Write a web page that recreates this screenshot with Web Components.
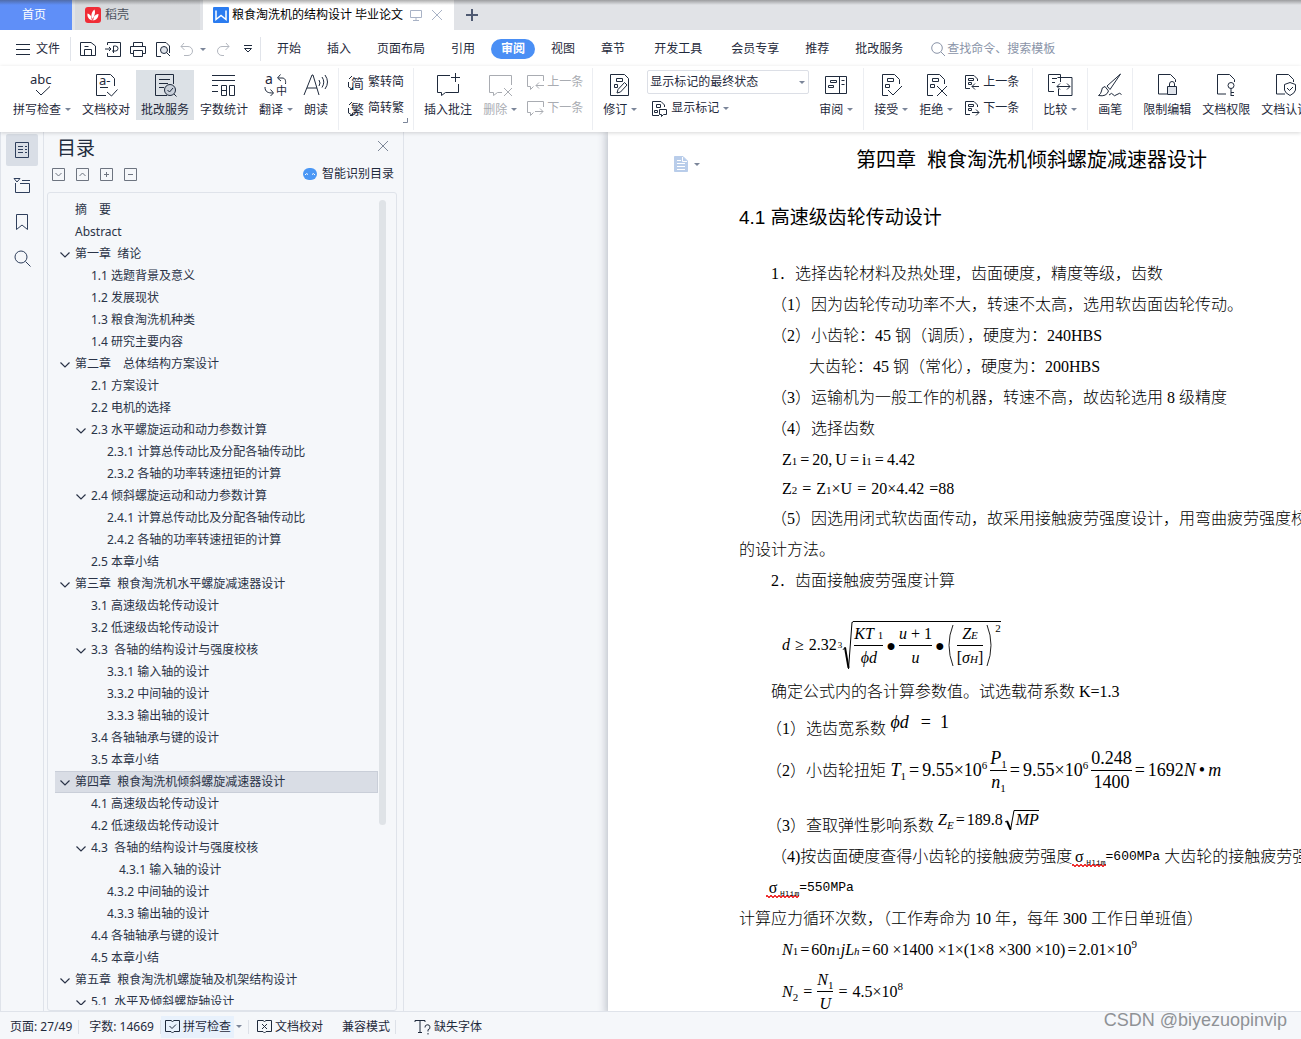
<!DOCTYPE html>
<html lang="zh-CN">
<head>
<meta charset="utf-8">
<title>粮食淘洗机的结构设计 毕业论文</title>
<style>
  html, body { margin: 0; height: 100%; overflow: hidden; }
  body { font: 12px/16px "Noto Sans", "Noto Sans CJK SC", sans-serif; color: #1f2a3c; background: #f5f7fa; }
</style>
</head>
<body>
<writer-app></writer-app>

<script>
const define = (name, css, html) => {
  customElements.define(name, class extends HTMLElement {
    constructor() {
      super();
      this.attachShadow({ mode: "open" });
    }
    connectedCallback() {
      if (this.ready) return;
      this.ready = true;
      const body = typeof html === "function" ? html(this) : html;
      this.shadowRoot.innerHTML = `<style>*{box-sizing:border-box}button{font:inherit;color:inherit;background:none;border:0;padding:0;margin:0;white-space:nowrap}${css}</style>${body}`;
    }
  });
};

/* Icon drawings: [width, height, svg content] */
const page = '<path d="M12 21H3.500V1.500H15.500L20.500 6.500V9"/>';
const smallPage = '<path d="M7 14.500H2.500V1.500H11L14.500 5V7"/><path d="M5.500 4.500h5v2h-5zM5.500 8.500h3v2h-3z"/>';
const markPage = '<path d="M9 22.500H3.500V1.500H15.500L20.500 6.500V11"/><path d="M8.500 5.500h6v3h-6zM6.500 11.500h4v3h-4z"/>';
const icons = {
  flame: [16, 16, '<rect width="16" height="16" rx="3" fill="#f02c36" stroke="none"/><path d="M7.500 13.500C3.500 12.500 2 9.500 2.500 6.500C4.500 7 6 8.500 6.500 10.500C6 7 7 4.500 9.500 2.500C10.500 5 10 7.500 8.500 10.500C9.500 8.500 11.500 7 13.500 7C13.500 10.500 11.500 13.500 7.500 13.500Z" fill="#fff" stroke="none"/><path d="M6.500 10.500L7.500 13.500L8.500 10.500" stroke="#f02c36" stroke-width=".8"/>'],
  writer: [16, 16, '<rect width="16" height="16" rx="1" fill="#2b7cf0" stroke="none"/><path d="M3 3.500V12.500L8 8.500L13 12.500V3.500" stroke="#fff" stroke-width="1.500"/>'],
  monitor: [12, 12, '<path d="M.5 1.500h11v7H.5zM6 8.500v3M3 11.500h6"/>'],
  close: [12, 12, '<path d="M1 1L11 11M11 1L1 11"/>'],
  plus: [12, 12, '<path d="M6 0V12M0 6H12" stroke-width="2"/>'],
  burger: [14, 14, '<path d="M0 2.500H14M0 7.500H14M0 12.500H14"/>'],
  save: [16, 16, '<path d="M.5 14.500V1.500H11L15.500 5V14.500ZM4.500 14V8.500H11.500V14M4.500 5.500H8.500"/>'],
  pdf: [16, 16, '<path d="M2.500 4V1.500H15.500V15.500H2.500V12M0 8h6M4 6l2 2l-2 2M8.500 12V5h2a2 2 0 0 1 0 5H7"/>'],
  print: [16, 16, '<path d="M3.500 5V1.500H12.500V5M3.500 12.500H.5V5.500H15.500V12.500H12.500M3.500 9.500H12.500V15.500H3.500Z"/>'],
  preview: [16, 16, '<path d="M6 15.500H1.500V1.500H11L14.500 5V12"/><circle cx="9" cy="9" r="3.500" fill="#dfe3ea"/><path d="M11.500 11.500L15 15"/>'],
  undo: [14, 14, '<path d="M4 1L1 4.500L4.500 8M1 4.500H8a4.200 4.200 0 0 1 0 9H4"/>'],
  redo: [14, 14, '<path d="M10 1L13 4.500L9.500 8M13 4.500H6a4.200 4.200 0 0 0 0 9H8"/>'],
  more: [8, 8, '<path d="M0 .5H8M.5 3.500L4 7L7.500 3.500Z"/>'],
  search: [15, 15, '<circle cx="6" cy="6" r="5.300"/><path d="M10 10L14 14"/>'],
  spell: [24, 24, '<text x="0" y="11" font-size="13">abc</text><path d="M6 17L11 22L20 13.500"/>'],
  proof: [24, 24, '<path d="M12 22.500H2.500V1.500H16.500L20.500 5.500V13M6 14.500H14M13 19L17.500 23L23.500 16.500"/><text x="5" y="12" font-size="13">a-</text>'],
  review: [24, 24, '<path d="M14 22.500H2.500V1.500H20.500V11M6 6.500H17M6 10.500H15M6 14.500H11"/><circle cx="17" cy="17" r="5.500" fill="#c8cfd9"/><path d="M14.500 17L16.500 19L20 15M21 21L23.500 23.500"/>'],
  count: [24, 24, '<path d="M0 2.500H23M0 7.500H23M0 12.500H6M0 18.500H6M9.500 12.500h5v10h-5zM9.500 17.500h5M17.500 12.500h5v10h-5z"/>'],
  translate: [24, 24, '<text x="1" y="11" font-size="14">a</text><text x="12" y="22" font-size="11">中</text><path d="M14 5H18C21 5 22 7 21.500 11M16.500 1.500L13.500 5L17 8M1 14C1 19 4 20 9 20M6.500 16.500L9.500 20L6.500 23"/>'],
  read: [24, 24, '<path d="M0 22L8 2H9L15 22M3 15H13M15 7Q17 10 15 13M18 4Q21.500 9 18 14.500M21 2Q26 9 21 16"/>'],
  toSimple: [17, 17, '<text x="3" y="14" font-size="13">简</text><path d="M4 2L1 5M.5 8V13L4 15M2 15.500H4.500V13"/>'],
  toTrad: [17, 17, '<text x="3" y="14" font-size="13">繁</text><path d="M4 2L1 5M.5 8V13L4 15M2 15.500H4.500V13"/>'],
  addNote: [24, 24, '<path d="M14 2.500H1.500V19.500H5.500V22.500L9.500 19.500H22.500V11M19.500 0V9M15 4.500H24"/>'],
  delNote: [24, 24, '<path d="M23.500 12V2.500H1.500V19.500H5.500V22.500L9.500 19.500H14M16 15L24 23M24 15L16 23"/>'],
  prevNote: [17, 18, '<path d="M16.500 8V2.500H.5V13.500H3.500V16.500L6.500 13.500M17 12.500H9M12 9.500L9 12.500L12 15.500"/>'],
  nextNote: [17, 18, '<path d="M16.500 8V2.500H.5V13.500H3.500V16.500L6.500 13.500M8 12.500H16M13 9.500L16 12.500L13 15.500"/>'],
  track: [24, 24, '<path d="M2.500 22.500V1.500H16.500L20.500 5.500V22.500ZM8.500 5.500h6v3h-6zM6.500 11.500h3v3h-3z"/><path d="M9 20L10 16.500L16.500 9.500L19 12L12.500 19Z" fill="#fff"/>'],
  showMark: [17, 17, '<path d="M8 15.500H1.500V1.500H10L13.500 5V7M5.500 4.500h4v3h-4zM3.500 10.500h3v2h-3zM8.500 9.500h7v5h-3l-2 2v-2h-2z"/>'],
  pane: [24, 24, '<path d="M1.500 3.500h21v17h-21zM15.500 3.500v17M6.500 7.500h6v2h-6zM4.500 12.500h5v2h-5zM17.500 7.500h3M17.500 11.500h3"/>'],
  accept: [24, 24, markPage + '<path d="M9 17L14 22L23 13"/>'],
  reject: [24, 24, markPage + '<path d="M13 13L23 23M23 13L13 23"/>'],
  prevMark: [17, 17, smallPage + '<path d="M16 12.500H9M12 9.500L9 12.500L12 15.500"/>'],
  nextMark: [17, 17, smallPage + '<path d="M9 12.500H16M13 9.500L16 12.500L13 15.500"/>'],
  compare: [24, 24, '<path d="M6 18.500H.5V1.500H12.500V9M9.500 4.500H24V22.500H10.500V16M4 5.500H9M4 9.500H7M9 13.500H22M12 10.500L9 13.500L12 16.500M19 10.500L22 13.500L19 16.500"/>'],
  brush: [24, 24, '<path d="M22.500 1L9 13L12 16.500L22.500 1ZM7 13.500Q3.500 14 3.500 18Q3 21 .5 22.500Q8.500 24 10.500 18ZM11 22Q14 19 15 21.500T19 21.500T23.500 21.500"/>'],
  lock: [24, 24, page + '<path d="M12.500 13.500h9v8h-9z" fill="#dfe3ea"/><path d="M14.500 13V11a2.500 2.500 0 0 1 5 0V13"/>'],
  key: [24, 24, page + '<circle cx="17" cy="12.500" r="3"/><path d="M17 15.500V23M17 19.500H20M17 22.500H20"/>'],
  shield: [24, 24, page + '<path d="M11.500 11.500L17 9.500L22.500 11.500V17Q22 20 17 22.500Q12 20 11.500 17ZM14 15L16.500 17.500L20 14"/>'],
  outline: [16, 16, '<path d="M1.500 .5h13v15h-13zM4 4.500h5M11 4.500h2M4 7.500h5M11 7.500h2M4 10.500h5M11 10.500h2"/>'],
  thumbs: [16, 16, '<path d="M1.500 5V14.500H15.500V5.500H6M8 2.500H16M0 .5H6L3 4Z"/>'],
  bookmark: [16, 16, '<path d="M2.500 .5H13.500V15.500L8 11L2.500 15.500Z"/>'],
  find: [17, 17, '<circle cx="7" cy="7" r="6"/><path d="M11.500 11.500L16.500 16.500"/>'],
  boxDown: [13, 13, '<path d="M.5 .5h12v12H.5zM3.500 5L6.500 8L9.500 5"/>'],
  boxUp: [13, 13, '<path d="M.5 .5h12v12H.5zM3.500 8L6.500 5L9.500 8"/>'],
  boxPlus: [13, 13, '<path d="M.5 .5h12v12H.5zM4 6.500H9M6.500 4V9"/>'],
  boxMinus: [13, 13, '<path d="M.5 .5h12v12H.5zM4 6.500H9"/>'],
  robot: [15, 13, '<rect width="14" height="12" rx="6" fill="#4a97f5" stroke="none"/><path d="M2 7Q3.500 4.500 5 6.500M9 6.500Q10.500 4.500 12 7" stroke="#fff"/>'],
  chevron: [10, 10, '<path d="M.5 2.500L5 7L9.500 2.500" stroke-width="1.200"/>'],
  bookCheck: [15, 15, '<path d="M.5 1.500H6L7.500 2.500L9 1.500H14.500V12.500H9L7.500 14L6 12.500H.5ZM4.500 7L7 9.500L11 5.500"/>'],
  bookCross: [15, 15, '<path d="M.5 1.500H6L7.500 2.500L9 1.500H14.500V12.500H9L7.500 14L6 12.500H.5ZM5 5L10 10M10 5L5 10"/>'],
  missing: [16, 16, '<path d="M0 3V1.500H10V3M5 1.500V13.500M3 13.500H7M10 8.500a2.500 2.500 0 1 1 3 2.200V12.500M13 14V15.500"/>'],
  doc: [14, 16, '<path d="M.5 .5H9L13.500 5V15.500H.5Z" fill="#b9cdea" stroke="#b9cdea"/><path d="M3 4.500H7M3 7.500H11M3 10.500H11M3 13.500H11M8.500 1V5.500H13" stroke="#fff"/>'],
  corner: [5, 5, '<path d="M4.500 0V4.500H0"/>'],
};

define("ui-icon", `
  :host { display: inline-flex; flex: none; }
  svg { display: block; fill: none; stroke: currentColor; stroke-width: 1; overflow: visible; }
  text { fill: currentColor; stroke: none; font-family: "Noto Sans", "Noto Sans CJK SC", sans-serif; }
`, el => {
  const [w, h, body] = icons[el.getAttribute("name")];
  return `<svg width="${w}" height="${h}" viewBox="0 0 ${w} ${h}" aria-hidden="true">${body}</svg>`;
});

define("ui-caret", `
  :host { display: inline-block; flex: none; border: 3px solid transparent; border-top-color: #7b8599; border-bottom: 0; }
`, "");

/* ---- Document tabs ---- */
define("tab-strip", `
  :host { display: flex; height: 30px; background: #e1e3e7; position: relative; }
  :host::after { content: ""; position: absolute; inset: 0 0 auto; height: 5px; background: linear-gradient(rgba(60,60,60,.42), rgba(60,60,60,0)); pointer-events: none; }
  button { display: flex; align-items: center; height: 30px; }
  .home { width: 72px; justify-content: center; padding-right: 4px; background: #5f8ff8; color: #fff; }
  .shell { width: 125px; margin: 0 3px; padding: 0 10px; gap: 4px; background: #d8dadd; color: #4c525e; }
  .file { padding: 0 11px 0 10px; gap: 3px; background: #fff; color: #000; }
  .file .tools { display: flex; gap: 9px; margin-left: 4px; color: #a9b3c6; align-items: center; }
  .new { padding: 0 12px; color: #4f5a72; }
`, `
  <button class="home">首页</button>
  <button class="shell"><ui-icon name="flame"></ui-icon>稻壳</button>
  <button class="file"><ui-icon name="writer"></ui-icon>粮食淘洗机的结构设计 毕业论文
    <span class="tools"><ui-icon name="monitor"></ui-icon><ui-icon name="close"></ui-icon></span></button>
  <button class="new" aria-label="新建"><ui-icon name="plus"></ui-icon></button>
`);

/* ---- Menu row ---- */
define("menu-row", `
  :host { display: flex; align-items: center; height: 36px; padding: 2px 0 0 16px; background: #fff; }
  .file { display: flex; align-items: center; gap: 6px; padding-right: 10px; }
  .quick { display: flex; align-items: center; gap: 9px; height: 24px; padding: 0 8px 0 9px; border: solid #e1e4ea; border-width: 0 1px; }
  .quick button { display: flex; align-items: center; gap: 6px; }
  .off { color: #b3b7bf; }
  .redo { margin: 0 5px 0 1px; }
  nav { display: flex; gap: 6px; padding-left: 6px; }
  nav button { height: 20px; padding: 0 10px; border-radius: 10px; }
  nav .wide { padding: 0 13px; }
  nav .on { background: #4a8ff5; color: #fff; font-weight: 700; }
  label { display: flex; align-items: center; gap: 1px; margin-left: 18px; color: #8a94a8; }
  input { width: 130px; border: 0; padding: 0; outline: 0; background: none; font: inherit; }
  input::placeholder { color: #8a94a8; opacity: 1; }
`, `
  <button class="file"><ui-icon name="burger"></ui-icon>文件</button>
  <div class="quick">
    <button aria-label="保存"><ui-icon name="save"></ui-icon></button>
    <button aria-label="输出为PDF"><ui-icon name="pdf"></ui-icon></button>
    <button aria-label="打印"><ui-icon name="print"></ui-icon></button>
    <button aria-label="打印预览"><ui-icon name="preview"></ui-icon></button>
    <button class="off" aria-label="撤消"><ui-icon name="undo"></ui-icon><ui-caret></ui-caret></button>
    <button class="off redo" aria-label="恢复"><ui-icon name="redo"></ui-icon></button>
    <button aria-label="更多"><ui-icon name="more"></ui-icon></button>
  </div>
  <nav>
    <button>开始</button><button>插入</button><button>页面布局</button><button>引用</button>
    <button class="on">审阅</button><button>视图</button><button>章节</button><button class="wide">开发工具</button>
    <button>会员专享</button><button>推荐</button><button>批改服务</button>
  </nav>
  <label><ui-icon name="search"></ui-icon><input type="text" placeholder="查找命令、搜索模板" aria-label="查找命令"></label>
`);

/* ---- Ribbon ---- */
define("ribbon-button", `
  :host { display: block; flex: none; }
  button { display: flex; flex-direction: column; align-items: center; gap: 4px; padding: 3px 5px 2px; height: 50px; }
  :host([active]) button { background: #dce1e6; }
  :host([off]) button { color: #a9acb2; }
  span { display: flex; align-items: center; gap: 4px; height: 17px; }
`, el => `<button><ui-icon name="${el.getAttribute("icon")}"></ui-icon>
  <span>${el.getAttribute("label")}${el.hasAttribute("menu") ? "<ui-caret></ui-caret>" : ""}</span></button>`);

define("ribbon-small", `
  :host { display: block; flex: none; }
  button { display: flex; align-items: center; gap: 3px; height: 24px; padding: 0 4px; }
  :host([off]) button { color: #a9acb2; }
  ui-caret { margin-left: 1px; }
`, el => `<button><ui-icon name="${el.getAttribute("icon")}"></ui-icon>${el.getAttribute("label")}
  ${el.hasAttribute("menu") ? "<ui-caret></ui-caret>" : ""}</button>`);

define("ribbon-group", `
  :host { display: flex; flex: none; gap: 1px; padding: 2px 5px 0; height: 62px; border-right: 1px solid #eceef2; }
`, `<slot></slot>`);

define("ribbon-bar", `
  :host { display: flex; height: 66px; padding: 2px 0 0 3px; background: #fff; overflow: hidden; position: relative; z-index: 1; box-shadow: 0 1px 4px rgba(0,0,0,.16); }
  .col { display: flex; flex-direction: column; gap: 2px; }
  .wide { min-width: 68px; }
  .dialog { align-self: flex-end; width: 0; margin: 0 0 3px -1px; color: #7b8599; }
  .dialog ui-icon { margin-left: -5px; }
  .pick { display: flex; align-items: center; margin: 0 4px; width: 162px; height: 24px; border: 1px solid #dcdfe6; border-radius: 2px; padding-right: 3px; }
  select { flex: 1; min-width: 0; height: 22px; appearance: none; border: 0; background: none; padding: 0 2px; font: inherit; color: inherit; }
`, `
  <ribbon-group>
    <ribbon-button icon="spell" label="拼写检查" menu></ribbon-button>
    <ribbon-button icon="proof" label="文档校对"></ribbon-button>
    <ribbon-button icon="review" label="批改服务" active></ribbon-button>
    <ribbon-button icon="count" label="字数统计"></ribbon-button>
    <ribbon-button icon="translate" label="翻译" menu></ribbon-button>
    <ribbon-button icon="read" label="朗读"></ribbon-button>
  </ribbon-group>
  <ribbon-group>
    <div class="col">
      <ribbon-small icon="toSimple" label="繁转简"></ribbon-small>
      <ribbon-small icon="toTrad" label="简转繁"></ribbon-small>
    </div>
    <div class="dialog"><ui-icon name="corner"></ui-icon></div>
  </ribbon-group>
  <ribbon-group>
    <ribbon-button icon="addNote" label="插入批注"></ribbon-button>
    <ribbon-button icon="delNote" label="删除" menu off></ribbon-button>
    <div class="col">
      <ribbon-small icon="prevNote" label="上一条" off></ribbon-small>
      <ribbon-small icon="nextNote" label="下一条" off></ribbon-small>
    </div>
  </ribbon-group>
  <ribbon-group>
    <ribbon-button icon="track" label="修订" menu></ribbon-button>
    <div class="col">
      <div class="pick"><select aria-label="显示标记"><option>显示标记的最终状态</option></select><ui-caret></ui-caret></div>
      <ribbon-small icon="showMark" label="显示标记" menu style="margin-left:4px"></ribbon-small>
    </div>
    <ribbon-button icon="pane" label="审阅" menu></ribbon-button>
  </ribbon-group>
  <ribbon-group>
    <ribbon-button icon="accept" label="接受" menu></ribbon-button>
    <ribbon-button icon="reject" label="拒绝" menu></ribbon-button>
    <div class="col wide">
      <ribbon-small icon="prevMark" label="上一条"></ribbon-small>
      <ribbon-small icon="nextMark" label="下一条"></ribbon-small>
    </div>
  </ribbon-group>
  <ribbon-group><ribbon-button icon="compare" label="比较" menu></ribbon-button></ribbon-group>
  <ribbon-group><ribbon-button icon="brush" label="画笔"></ribbon-button></ribbon-group>
  <ribbon-group>
    <ribbon-button icon="lock" label="限制编辑"></ribbon-button>
    <ribbon-button icon="key" label="文档权限"></ribbon-button>
    <ribbon-button icon="shield" label="文档认证"></ribbon-button>
  </ribbon-group>
`);

/* ---- Navigation rail and table of contents ---- */
define("side-rail", `
  :host { display: flex; flex-direction: column; gap: 4px; flex: none; width: 44px; padding: 2px 5px 0; border: solid #dfe3ea; border-width: 0 1px; color: #2f3f5c; }
  button { display: flex; align-items: center; justify-content: center; width: 32px; height: 32px; border-radius: 2px; }
  .on { background: #d9dee6; }
`, `
  <button class="on" aria-label="目录"><ui-icon name="outline"></ui-icon></button>
  <button aria-label="章节"><ui-icon name="thumbs"></ui-icon></button>
  <button aria-label="书签"><ui-icon name="bookmark"></ui-icon></button>
  <button aria-label="查找"><ui-icon name="find"></ui-icon></button>
`);

define("toc-item", `
  :host { display: block; }
  a { display: flex; align-items: center; height: 22px; padding-left: calc(4px + 16px * var(--depth)); white-space: pre; text-decoration: none; color: #2a3347; border: 1px solid transparent; border-left: 0; }
  :host([current]) a { background: #d9dde5; border-color: #c9ced8; }
  i { display: flex; align-items: center; flex: none; width: 16px; height: 16px; padding: 2px 0 0 1px; }
`, el => `<a href="#" style="--depth:${el.getAttribute("depth")}"><i>${el.hasAttribute("open") ? '<ui-icon name="chevron"></ui-icon>' : ""}</i><slot></slot></a>`);

const toc = `
0 |摘　要
0 |Abstract
0v|第一章  绪论
1 |1.1 选题背景及意义
1 |1.2 发展现状
1 |1.3 粮食淘洗机种类
1 |1.4 研究主要内容
0v|第二章　总体结构方案设计
1 |2.1 方案设计
1 |2.2 电机的选择
1v|2.3 水平螺旋运动和动力参数计算
2 |2.3.1 计算总传动比及分配各轴传动比
2 |2.3.2 各轴的功率转速扭钜的计算
1v|2.4 倾斜螺旋运动和动力参数计算
2 |2.4.1 计算总传动比及分配各轴传动比
2 |2.4.2 各轴的功率转速扭钜的计算
1 |2.5 本章小结
0v|第三章  粮食淘洗机水平螺旋减速器设计
1 |3.1 高速级齿轮传动设计
1 |3.2 低速级齿轮传动设计
1v|3.3  各轴的结构设计与强度校核
2 |3.3.1 输入轴的设计
2 |3.3.2 中间轴的设计
2 |3.3.3 输出轴的设计
1 |3.4 各轴轴承与键的设计
1 |3.5 本章小结
0c|第四章  粮食淘洗机倾斜螺旋减速器设计
1 |4.1 高速级齿轮传动设计
1 |4.2 低速级齿轮传动设计
1v|4.3  各轴的结构设计与强度校核
2 |　4.3.1 输入轴的设计
2 |4.3.2 中间轴的设计
2 |4.3.3 输出轴的设计
1 |4.4 各轴轴承与键的设计
1 |4.5 本章小结
0v|第五章  粮食淘洗机螺旋轴及机架结构设计
1v|5.1  水平及倾斜螺旋轴设计`.trim().split("\n");

define("toc-panel", `
  :host { display: flex; flex-direction: column; flex: none; width: 360px; padding: 0 6px 0 3px; border-right: 1px solid #dfe3ea; }
  header, .tools { display: flex; align-items: center; justify-content: space-between; }
  header { height: 31px; padding: 0 8px 0 10px; }
  h2 { margin: 0; font-size: 19px; line-height: 28px; font-weight: 400; color: #232c3d; }
  header button { color: #7d8798; }
  .tools { height: 22px; padding: 0 3px 0 5px; margin-bottom: 7px; }
  .tools div { display: flex; gap: 11px; color: #6d7480; }
  .tools button { display: flex; align-items: center; gap: 4px; }
  .smart { color: #1f2a3c; }
  .box { flex: 1; min-height: 0; display: flex; padding: 6px 10px 5px 7px; border: 1px solid #dfe3ea; border-radius: 3px; }
  .list { flex: 1; overflow: hidden; }
  .bar { flex: none; width: 7px; height: 625px; margin: 1px 0 0 1px; border-radius: 4px; background: #dfe3e7; }
`, `
  <header><h2>目录</h2><button aria-label="关闭"><ui-icon name="close"></ui-icon></button></header>
  <div class="tools">
    <div>
      <button aria-label="展开"><ui-icon name="boxDown"></ui-icon></button>
      <button aria-label="收起"><ui-icon name="boxUp"></ui-icon></button>
      <button aria-label="增加"><ui-icon name="boxPlus"></ui-icon></button>
      <button aria-label="减少"><ui-icon name="boxMinus"></ui-icon></button>
    </div>
    <button class="smart"><ui-icon name="robot"></ui-icon>智能识别目录</button>
  </div>
  <div class="box"><nav class="list">${toc.map(row =>
    `<toc-item depth="${row[0]}" ${row[1] !== " " ? "open" : ""} ${row[1] === "c" ? "current" : ""}>${row.slice(3)}</toc-item>`).join("")}</nav>
    <div class="bar"></div></div>
`);

/* ---- Formula parts ---- */
define("math-row", `
  :host { display: inline-flex; align-items: center; gap: 3px; line-height: 22px; white-space: nowrap; }
  :host([big]) { font-size: 18px; }
  :host([loose]) { gap: 5px; }
  :host([tight]) { gap: 2px; }
`, `<slot></slot>`);

define("math-frac", `
  :host { display: inline-flex; flex-direction: column; align-items: center; }
  div { display: flex; justify-content: center; height: 23px; align-items: center; }
  .bar { align-self: stretch; height: 1px; background: #000; }
`, `<div><slot name="num"></slot></div><div class="bar"></div><div><slot name="den"></slot></div>`);

define("math-root", `
  :host { display: inline-flex; align-items: stretch; }
  svg { flex: none; width: 10px; overflow: visible; }
  path { fill: none; stroke: #000; vector-effect: non-scaling-stroke; }
  .leg { stroke-width: 2; }
  div { display: flex; align-items: center; gap: 3px; border-top: 1px solid #000; padding: 0 0 0 1px; }
`, `<svg viewBox="0 0 10 20" preserveAspectRatio="none"><path d="M0 12L2 11"/><path class="leg" d="M2 11L5.500 19.500"/><path d="M5.500 20L9 .5H10"/></svg><div><slot></slot></div>`);

/* ---- Document ---- */
define("doc-line", `
  :host { display: flex; align-items: flex-end; line-height: 31px; white-space: pre; }
  :host([indent="1"]) { padding-left: 32px; }
  :host([indent="2"]) { padding-left: 43px; }
  :host([indent="3"]) { padding-left: 70px; }
  :host([indent="hang"]) { padding-left: 27px; }
`, `<slot></slot>`);

define("doc-view", `
  :host { display: block; flex: 1; min-width: 0; overflow: hidden; padding-left: 204px; }
  article { display: flex; width: 848px; min-height: 100%; background: #fff; box-shadow: 0 0 9px 1px rgba(40,50,70,.32); color: #000; font: 16px/31px "Liberation Serif", "Noto Sans CJK SC", serif; font-weight: 300; }
  .gutter { flex: none; width: 131px; padding: 24px 0 0 66px; }
  .gutter button { display: flex; align-items: center; gap: 6px; }
  .text { flex: none; width: 585px; }
  h1, h2 { margin: 0; font-family: "Liberation Sans", "Noto Sans CJK SC", sans-serif; font-weight: 400; }
  h1 { font-size: 20px; line-height: 32px; padding-top: 12px; text-align: center; white-space: pre; }
  h2 { font-size: 19px; line-height: 32px; margin: 26px 0 24px; }
  sub, sup { font-size: 11px; line-height: 0; }
  sup { vertical-align: 7px; }
  sub { vertical-align: -4px; }
  small { font-size: 11px; line-height: 0; }
  .eq { height: 31px; align-items: center; }
  .eq.second { height: 28px; }
  .root { height: 80px; align-items: center; padding-top: 18px; line-height: 22px; }
  .root math-row { gap: 1px; }
  .raised { padding-bottom: 6px; line-height: 31px; }
  .torque { height: 60px; align-items: center; padding-bottom: 8px; }
  .last { padding-top: 3px; }
  .cube { align-self: center; font-size: 9px; }
  .paren { height: 47px; width: 6px; }
  .paren path { fill: none; stroke: #222; }
  .square { align-self: flex-start; line-height: 12px; font-size: 11px; }
  .mono { font-family: "Liberation Mono", monospace; font-size: 13px; }
  .wave { background:
      linear-gradient(45deg, transparent 35%, #e33 35% 65%, transparent 65%) 0 23px / 4px 3px repeat-x,
      linear-gradient(-45deg, transparent 35%, #e33 35% 65%, transparent 65%) 2px 23px / 4px 3px repeat-x; }
  .wave sub { font: 8px/0 "Liberation Mono", monospace; vertical-align: -3px; }
  .wave b { display: inline-block; width: 14px; font-weight: 400; line-height: 20px; text-align: center; }
`, `
  <article>
    <div class="gutter"><button aria-label="文档选项"><ui-icon name="doc"></ui-icon><ui-caret></ui-caret></button></div>
    <div class="text">
      <h1>第四章  粮食淘洗机倾斜螺旋减速器设计</h1>
      <h2>4.1 高速级齿轮传动设计</h2>
      <doc-line indent="1">1．选择齿轮材料及热处理，齿面硬度，精度等级，齿数</doc-line>
      <doc-line indent="1">（1）因为齿轮传动功率不大，转速不太高，选用软齿面齿轮传动。</doc-line>
      <doc-line indent="1">（2）小齿轮：45 钢（调质），硬度为：240HBS</doc-line>
      <doc-line indent="3">大齿轮：45 钢（常化），硬度为：200HBS</doc-line>
      <doc-line indent="1">（3）运输机为一般工作的机器，转速不高，故齿轮选用 8 级精度</doc-line>
      <doc-line indent="1">（4）选择齿数</doc-line>
      <doc-line indent="2" class="eq"><math-row><span>Z<small>1</small></span><span>=</span><span>20,</span><span>U</span><span>=</span><span>i<small>1</small></span><span>=</span><span>4.42</span></math-row></doc-line>
      <doc-line indent="2" class="eq second"><math-row loose><span>Z<small>2</small></span><span>=</span><span>Z<small>1</small>×U</span><span>=</span><span>20×4.42</span><span>=88</span></math-row></doc-line>
      <doc-line indent="1">（5）因选用闭式软齿面传动，故采用接触疲劳强度设计，用弯曲疲劳强度校</doc-line>
      <doc-line>的设计方法。</doc-line>
      <doc-line indent="1">2．齿面接触疲劳强度计算</doc-line>
      <doc-line indent="2" class="root"><math-row><i>d</i><span>&nbsp;≥&nbsp;</span><span>2.32</span><span class="cube">3</span><math-root>
        <math-frac><span slot="num"><i>KT</i> <small>1</small></span><span slot="den"><i>ϕd</i></span></math-frac><span>●</span><math-frac><span slot="num"><i>u</i> + 1</span><i slot="den">u</i></math-frac><span>●</span><svg class="paren" viewBox="0 0 6 47"><path d="M5 3Q-3 23 5 44"/></svg><math-frac><i slot="num">Z<small>E</small></i><span slot="den">[<i>σ<small>H</small></i>]</span></math-frac><svg class="paren" viewBox="0 0 6 47"><path d="M1 3Q9 23 1 44"/></svg><span class="square">2</span></math-root></math-row></doc-line>
      <doc-line indent="1">确定公式内的各计算参数值。试选载荷系数 K=1.3</doc-line>
      <doc-line indent="hang">（1）选齿宽系数<math-row big class="raised"><i>&nbsp;ϕd</i><span>&nbsp;&nbsp;=&nbsp;&nbsp;1</span></math-row></doc-line>
      <doc-line indent="hang" class="torque">（2）小齿轮扭矩<math-row big><span><i>&nbsp;T</i><sub>1</sub></span><span>=</span><span>9.55×10<sup>6</sup></span><math-frac><span slot="num"><i>P</i><sub>1</sub></span><span slot="den"><i>n</i><sub>1</sub></span></math-frac><span>=</span><span>9.55×10<sup>6</sup></span><math-frac><span slot="num">0.248</span><span slot="den">1400</span></math-frac><span>=</span><span>1692<i>N</i></span><span>•</span><i>m</i></math-row></doc-line>
      <doc-line indent="hang">（3）查取弹性影响系数<math-row tight class="raised"><span><i>&nbsp;Z<sub>E</sub></i></span><span>=</span><span>189.8</span><math-root style="line-height:16px"><i>MP</i></math-root></math-row></doc-line>
      <doc-line indent="1">（4)按齿面硬度查得小齿轮的接触疲劳强度<span class="wave"><b>σ</b><sub>Hlim</sub></span><span class="mono">=600MPa</span> 大齿轮的接触疲劳强</doc-line>
      <doc-line indent="hang"><span class="wave"><b>σ</b><sub>Hlim</sub></span><span class="mono">=550MPa</span></doc-line>
      <doc-line>计算应力循环次数，（工作寿命为 10 年，每年 300 工作日单班值）</doc-line>
      <doc-line indent="2" class="eq"><math-row tight><span><i>N</i><small>1</small></span><span>=</span><span>60<i>n</i><small>1</small><i>jL<small>h</small></i></span><span>=</span><span>60 ×1400 ×1×(1×8 ×300 ×10)</span><span>=</span><span>2.01×10<sup>9</sup></span></math-row></doc-line>
      <doc-line indent="2" class="last"><math-row loose><span><i>N</i><sub>2</sub></span><span>=</span><math-frac><span slot="num"><i>N</i><sub>1</sub></span><i slot="den">U</i></math-frac><span>=</span><span>4.5×10<sup>8</sup></span></math-row></doc-line>
    </div>
  </article>
`);

/* ---- Status bar ---- */
define("status-bar", `
  :host { display: flex; align-items: center; flex: none; height: 28px; padding: 2px 0 0; border-top: 1px solid #dfe3ea; background: #f5f7fa; position: relative; }
  span, button { display: flex; align-items: center; gap: 3px; height: 22px; white-space: nowrap; }
  .page { padding: 0 6px 0 10px; }
  .words { padding: 0 6px 0 10px; }
  .rule { width: 1px; height: 14px; background: #dde1e8; }
  .spell { padding: 0 3px 0 4px; background: #e8f1fc; }
  ui-caret { margin: 0 6px 0 2px; }
  .proof { padding: 0 10px 0 8px; }
  .compat { padding: 0 5px 0 9px; }
  .font { padding-left: 19px; }
  .mark { margin: -14px 14px 0 auto; font: 18px/20px "Liberation Sans", sans-serif; color: #8f9296; }
`, `
  <span class="page">页面: 27/49</span><div class="rule"></div>
  <span class="words">字数: 14669</span><div class="rule"></div>
  <button class="spell"><ui-icon name="bookCheck"></ui-icon>拼写检查</button><ui-caret></ui-caret><div class="rule"></div>
  <button class="proof"><ui-icon name="bookCross"></ui-icon>文档校对</button>
  <button class="compat">兼容模式</button><div class="rule"></div>
  <button class="font"><ui-icon name="missing"></ui-icon>缺失字体</button>
  <span class="mark">CSDN @biyezuopinvip</span>
`);

define("writer-app", `
  :host { display: flex; flex-direction: column; height: 100vh; overflow: hidden; }
  tab-strip, menu-row, ribbon-bar { flex: none; }
  main { flex: 1; min-height: 0; display: flex; }
`, `
  <tab-strip></tab-strip>
  <menu-row></menu-row>
  <ribbon-bar></ribbon-bar>
  <main><side-rail></side-rail><toc-panel></toc-panel><doc-view></doc-view></main>
  <status-bar></status-bar>
`);
</script>
</body>
</html>
